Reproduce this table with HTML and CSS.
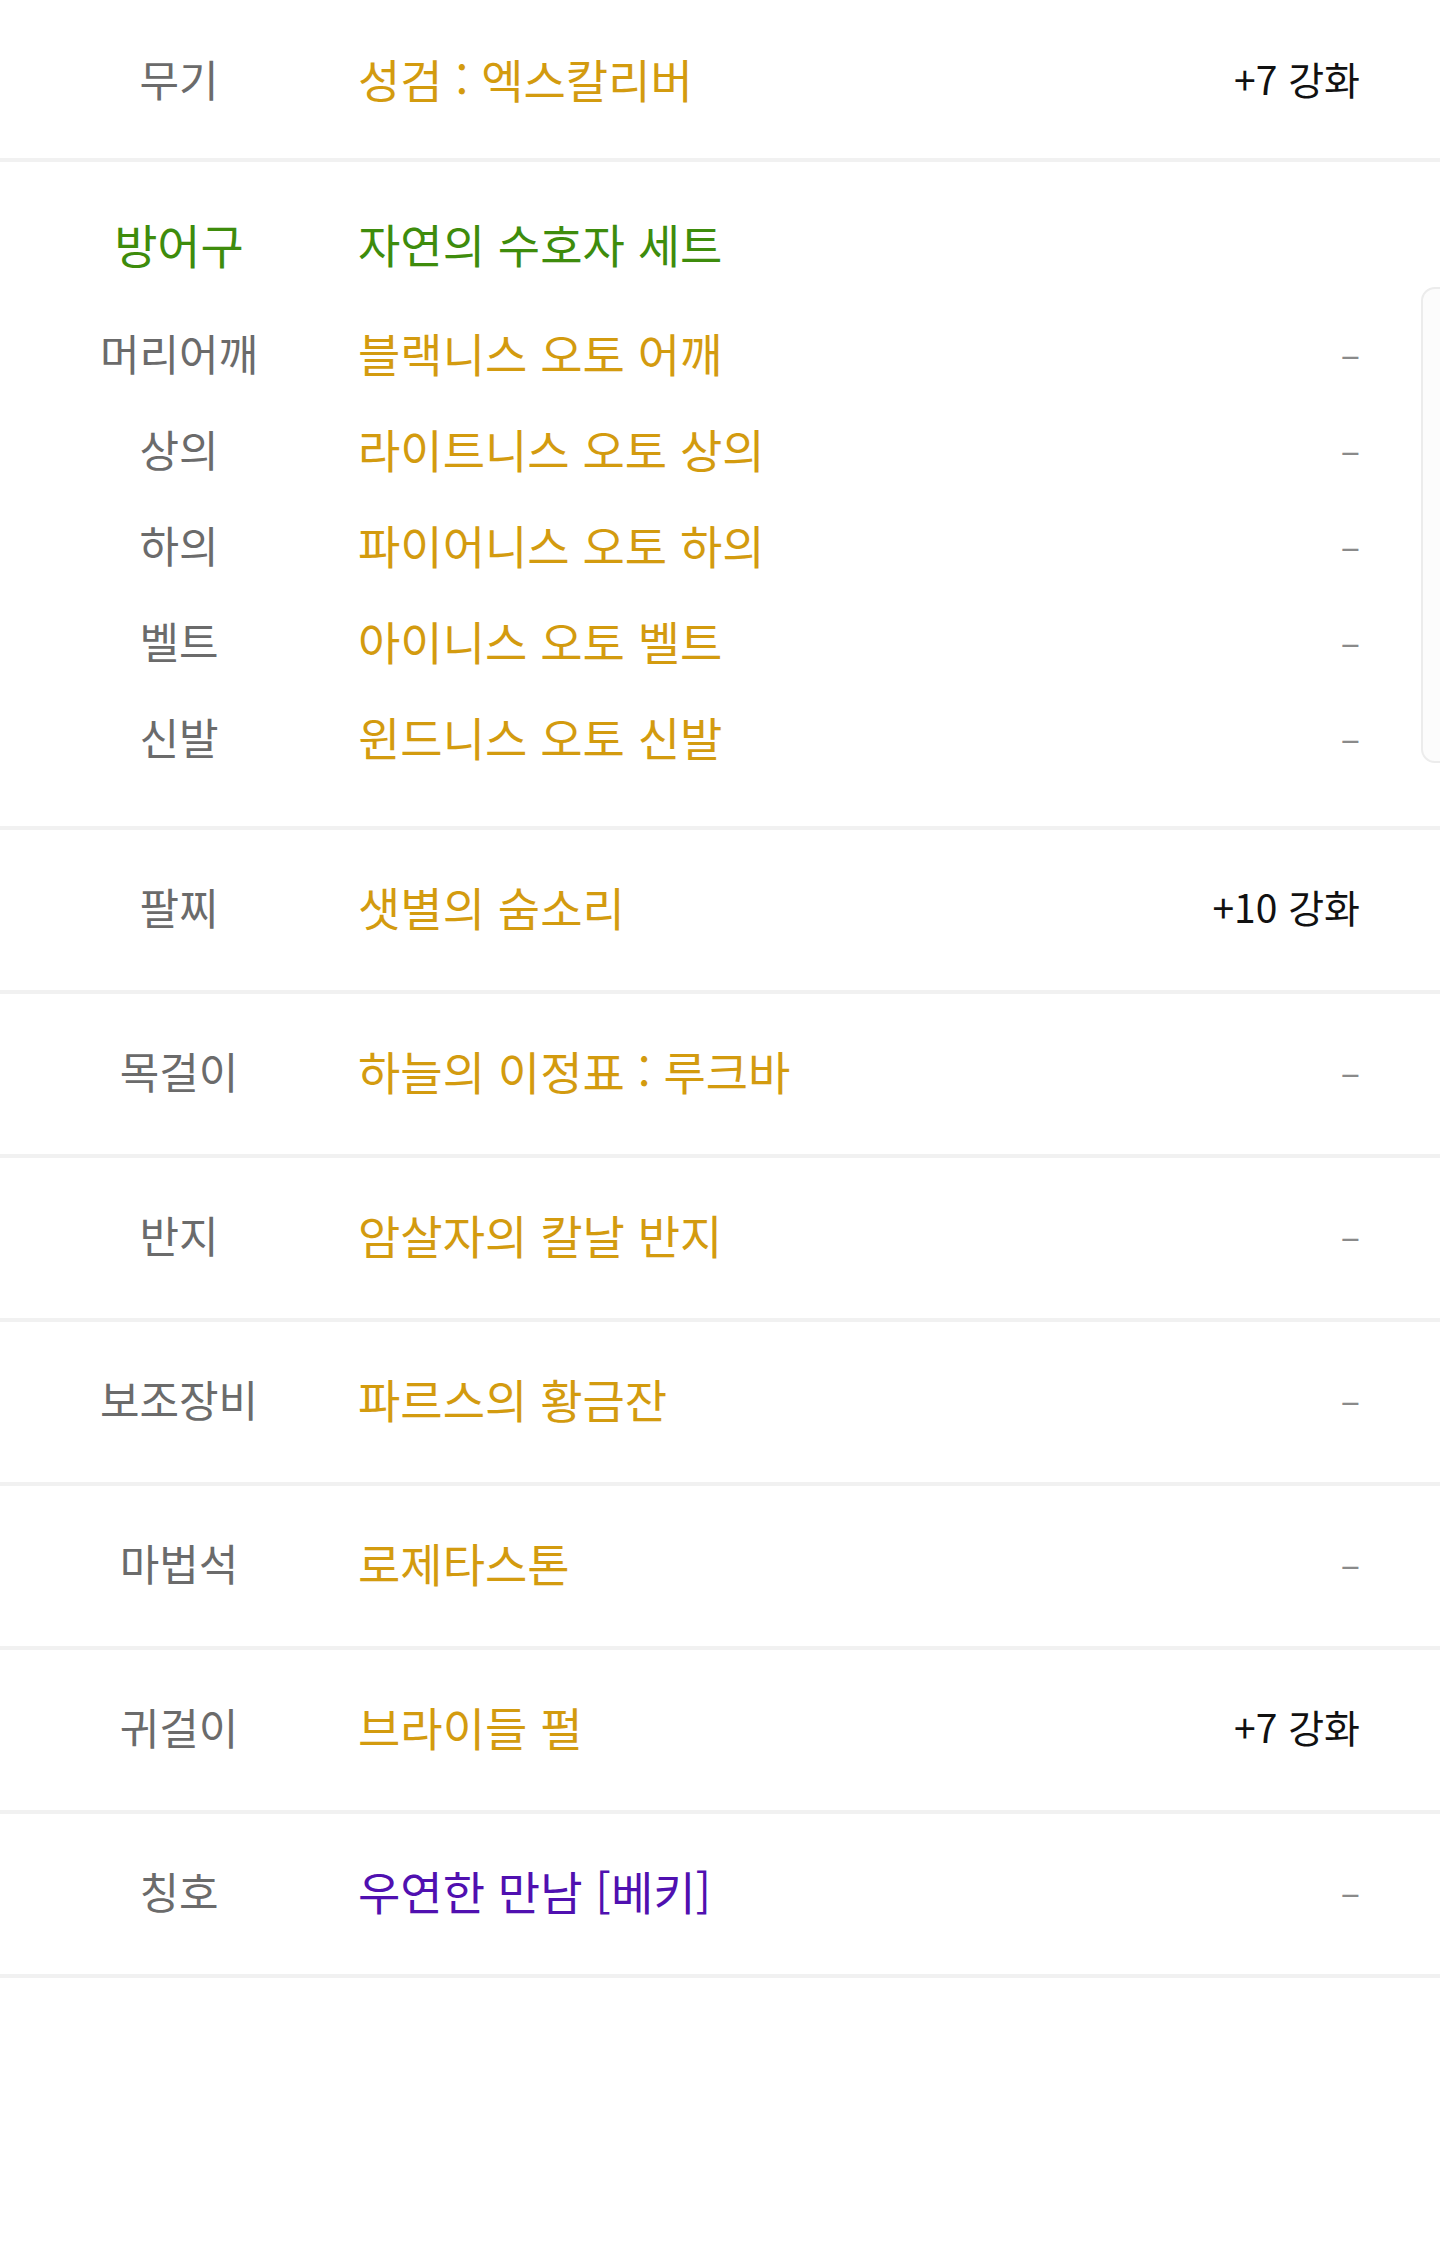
FILE: index.html
```html
<!DOCTYPE html>
<html lang="ko">
<head>
  <meta charset="UTF-8">
  <title>장비</title>
  <link rel="stylesheet" href="styles.css">
</head>
<body>

  <div class="equip-list">

    <!-- 무기 -->
    <div class="equip-row">
      <div class="slot">무기</div>
      <div class="item gold">성검 : 엑스칼리버</div>
      <div class="enhance">+7 강화</div>
    </div>

    <!-- 방어구 세트 -->
    <div class="armor-set">
      <div class="set-head">
        <div class="slot green">방어구</div>
        <div class="item green">자연의 수호자 세트</div>
      </div>
      <div class="set-part">
        <div class="slot">머리어깨</div>
        <div class="item gold">블랙니스 오토 어깨</div>
        <div class="enhance none">–</div>
      </div>
      <div class="set-part">
        <div class="slot">상의</div>
        <div class="item gold">라이트니스 오토 상의</div>
        <div class="enhance none">–</div>
      </div>
      <div class="set-part">
        <div class="slot">하의</div>
        <div class="item gold">파이어니스 오토 하의</div>
        <div class="enhance none">–</div>
      </div>
      <div class="set-part">
        <div class="slot">벨트</div>
        <div class="item gold">아이니스 오토 벨트</div>
        <div class="enhance none">–</div>
      </div>
      <div class="set-part">
        <div class="slot">신발</div>
        <div class="item gold">윈드니스 오토 신발</div>
        <div class="enhance none">–</div>
      </div>
    </div>

    <div class="equip-row">
      <div class="slot">팔찌</div>
      <div class="item gold">샛별의 숨소리</div>
      <div class="enhance">+10 강화</div>
    </div>

    <div class="equip-row">
      <div class="slot">목걸이</div>
      <div class="item gold">하늘의 이정표 : 루크바</div>
      <div class="enhance none">–</div>
    </div>

    <div class="equip-row">
      <div class="slot">반지</div>
      <div class="item gold">암살자의 칼날 반지</div>
      <div class="enhance none">–</div>
    </div>

    <div class="equip-row">
      <div class="slot">보조장비</div>
      <div class="item gold">파르스의 황금잔</div>
      <div class="enhance none">–</div>
    </div>

    <div class="equip-row">
      <div class="slot">마법석</div>
      <div class="item gold">로제타스톤</div>
      <div class="enhance none">–</div>
    </div>

    <div class="equip-row">
      <div class="slot">귀걸이</div>
      <div class="item gold">브라이들 펄</div>
      <div class="enhance">+7 강화</div>
    </div>

    <div class="equip-row">
      <div class="slot">칭호</div>
      <div class="item purple">우연한 만남 [베키]</div>
      <div class="enhance none">–</div>
    </div>

  </div>

  <!-- 오른쪽 스크롤 손잡이 -->
  <div class="scroll-handle"></div>

</body>
</html>
```

FILE: styles.css
```css
body {
  margin: 0;
  background: #fff;
  font-family: "Noto Sans CJK KR", "Noto Sans", sans-serif;
  color: #111;
}

.equip-list {
  margin-top: -3px;
}

.equip-row,
.set-head,
.set-part {
  display: flex;
  align-items: center;
  padding-right: 80px;
}

.equip-row {
  height: 160px;
  border-bottom: 4px solid #f1f1f1;
}

.equip-row:first-child {
  height: 161px;
}

.armor-set ~ .equip-row {
  height: 152px;
  padding-bottom: 8px;
}

.armor-set {
  padding: 33px 0 42px;
  border-bottom: 4px solid #f1f1f1;
}

.set-head {
  height: 96px;
  margin-bottom: 13px;
}

.set-part {
  height: 96px;
}

.slot {
  width: 358px;
  flex-shrink: 0;
  text-align: center;
  font-size: 43px;
  color: #6b6b6b;
}

.item {
  flex: 1;
  font-size: 46px;
}

.enhance {
  font-size: 39px;
  color: #111;
}

.enhance.none {
  color: #8a8a8a;
  font-size: 36px;
}

.gold {
  color: #d39b0f;
}

.green {
  color: #3e8c0c;
}

.slot.green {
  font-size: 47px;
}

.purple {
  color: #5010b0;
}

.scroll-handle {
  position: absolute;
  left: 1421px;
  top: 287px;
  width: 40px;
  height: 472px;
  border: 2px solid #ececec;
  border-radius: 14px;
  background: #fcfcfc;
}
```
